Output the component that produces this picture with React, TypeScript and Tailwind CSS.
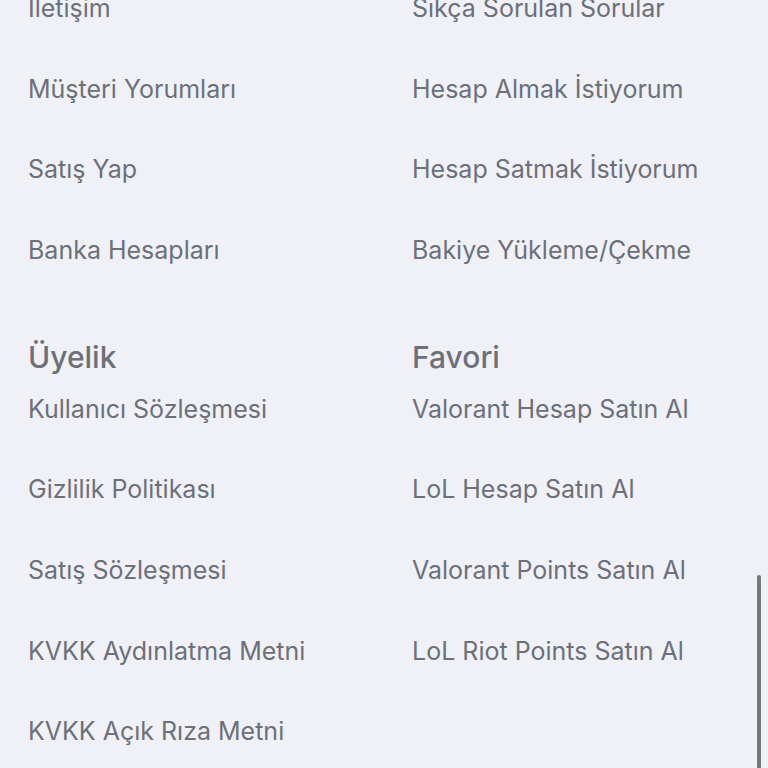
const SECTIONS = [
  {
    left: { title: null, links: ['İletişim', 'Müşteri Yorumları', 'Satış Yap', 'Banka Hesapları'] },
    right: {
      title: null,
      links: ['Sıkça Sorulan Sorular', 'Hesap Almak İstiyorum', 'Hesap Satmak İstiyorum', 'Bakiye Yükleme/Çekme'],
    },
  },
  {
    left: {
      title: 'Üyelik',
      links: ['Kullanıcı Sözleşmesi', 'Gizlilik Politikası', 'Satış Sözleşmesi', 'KVKK Aydınlatma Metni', 'KVKK Açık Rıza Metni'],
    },
    right: {
      title: 'Favori',
      links: ['Valorant Hesap Satın Al', 'LoL Hesap Satın Al', 'Valorant Points Satın Al', 'LoL Riot Points Satın Al'],
    },
  },
];

function LinkColumn({ title, links }: { title: string | null; links: string[] }) {
  return (
    <div className="flex flex-col">
      {title && <h3 className="text-[30px] leading-[40px] font-medium text-[#6b7079] mb-4">{title}</h3>}
      <ul className="flex flex-col gap-[48.7px]">
        {links.map((l) => (
          <li key={l} className="h-8 text-[25px] leading-8 text-[#6b7079] whitespace-nowrap">
            <a href="#">{l}</a>
          </li>
        ))}
      </ul>
    </div>
  );
}

export default function App() {
  return (
    <div
      className="relative h-[768px] w-[768px] overflow-hidden bg-[#f0f1f6]"
      style={{ fontFamily: 'Inter, "Noto Sans", sans-serif' }}
    >
      <div className="-mt-2 flex flex-col gap-[70.5px] pl-[28px]">
        {SECTIONS.map((s, i) => (
          <div key={i} className="grid grid-cols-[384px_1fr]">
            <LinkColumn {...s.left} />
            <LinkColumn {...s.right} />
          </div>
        ))}
      </div>
      <div className="absolute right-[7px] top-[575px] h-[220px] w-[4px] rounded-full bg-[#77787c]" />
    </div>
  );
}
